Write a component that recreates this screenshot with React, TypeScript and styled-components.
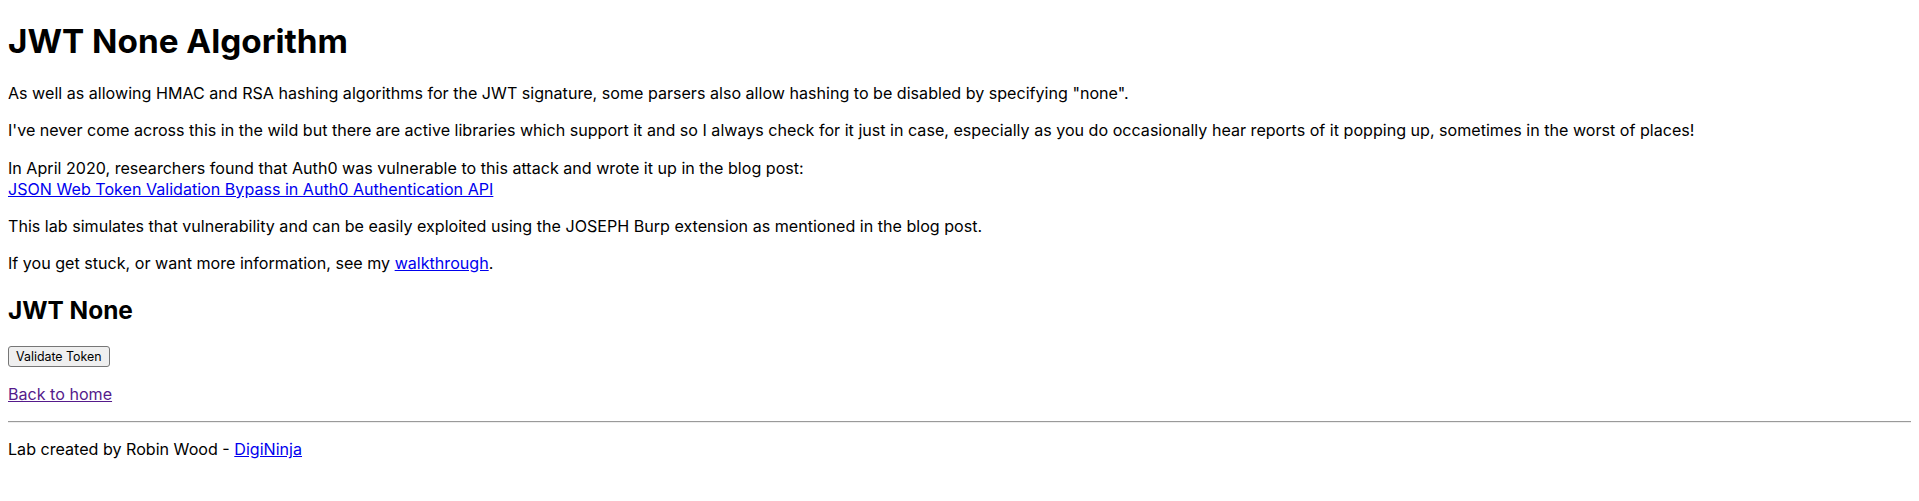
import React from 'react';
import styled, { createGlobalStyle } from 'styled-components';

const GlobalStyle = createGlobalStyle`
  body {
    margin: 0 8px 8px;
    background: #ffffff;
    color: #000000;
    font-family: "Inter", "Liberation Sans", sans-serif;
    font-size: 16.1px;
    line-height: 21.28px;
  }
`;

const Page = styled.main`
  display: block;
  padding-top: 20px;
`;

const Title = styled.h1`
  margin: 0 0 21px;
  font-size: 33.3px;
  line-height: 42px;
  font-weight: 700;
`;

const SubTitle = styled.h2`
  margin: 19.92px 0;
  font-size: 24.4px;
  line-height: 31.92px;
  font-weight: 700;
`;

const Para = styled.p`
  margin: 16px 0;
`;

const Link = styled.a<{ $visited?: boolean }>`
  color: ${(p) => (p.$visited ? '#551a8b' : '#0000ee')};
  text-decoration: underline;
  cursor: pointer;
`;

const Button = styled.button`
  box-sizing: border-box;
  height: 21px;
  margin: 0;
  padding: 1px 7px;
  vertical-align: top;
  font-family: "Inter", "Liberation Sans", sans-serif;
  font-size: 12.4px;
  line-height: 17px;
  color: #000000;
  background: #efefef;
  border: 1px solid #767676;
  border-radius: 3px;
`;

const Rule = styled.hr`
  margin: 16px 0;
  border: none;
  border-top: 1px solid #9a9a9a;
  border-bottom: 1px solid #eeeeee;
`;

export default function App() {
  return (
    <>
      <GlobalStyle />
      <Page>
        <Title>JWT None Algorithm</Title>
        <Para>
          As well as allowing HMAC and RSA hashing algorithms for the JWT signature, some parsers also allow
          hashing to be disabled by specifying "none".
        </Para>
        <Para>
          I've never come across this in the wild but there are active libraries which support it and so I always
          check for it just in case, especially as you do occasionally hear reports of it popping up, sometimes in
          the worst of places!
        </Para>
        <Para>
          In April 2020, researchers found that Auth0 was vulnerable to this attack and wrote it up in the blog post:
          <br />
          <Link href="#">JSON Web Token Validation Bypass in Auth0 Authentication API</Link>
        </Para>
        <Para>
          This lab simulates that vulnerability and can be easily exploited using the JOSEPH Burp extension as
          mentioned in the blog post.
        </Para>
        <Para>
          If you get stuck, or want more information, see my <Link href="#">walkthrough</Link>.
        </Para>
        <SubTitle>JWT None</SubTitle>
        <Para>
          <Button type="button">Validate Token</Button>
        </Para>
        <Para>
          <Link href="#" $visited>
            Back to home
          </Link>
        </Para>
        <Rule />
        <Para>
          Lab created by Robin Wood - <Link href="#">DigiNinja</Link>
        </Para>
      </Page>
    </>
  );
}
